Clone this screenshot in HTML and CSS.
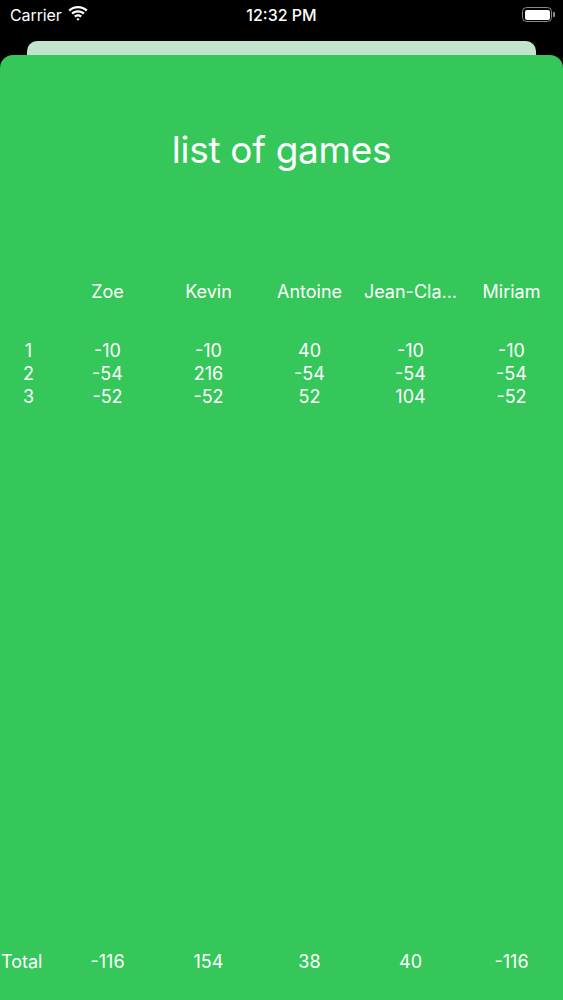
FILE: index.html
```html
<!DOCTYPE html>
<html>
<head>
<meta charset="utf-8">
<link rel="stylesheet" href="styles.css">
</head>
<body>
<div class="screen">
  <div class="status">
    <div class="status-left">
      <span class="carrier">Carrier</span>
      <svg class="wifi" width="20" height="15" viewBox="0 0 20 15">
        <path d="M10 2.2c3.1 0 5.9 1.2 8 3.2l1.6-1.6C17.1 1.4 13.7 0 10 0S2.9 1.4.4 3.8L2 5.4c2.1-2 4.9-3.2 8-3.2z" fill="#fff"/>
        <path d="M10 6.4c2 0 3.8.8 5.1 2l1.6-1.6C15 5.1 12.6 4.2 10 4.2S5 5.1 3.3 6.8l1.6 1.6c1.3-1.2 3.1-2 5.1-2z" fill="#fff"/>
        <path d="M10 10.5c.9 0 1.7.3 2.3.9l1.6-1.6C12.9 8.8 11.5 8.3 10 8.3s-2.9.5-3.9 1.5l1.6 1.6c.6-.6 1.4-.9 2.3-.9z" fill="#fff"/>
        <path d="M10 14.8l1.6-1.9c-.4-.4-1-.6-1.6-.6s-1.2.2-1.6.6z" fill="#fff"/>
      </svg>
    </div>
    <span class="time">12:32 PM</span>
    <div class="battery">
      <div class="battery-body"><div class="battery-fill"></div></div>
      <div class="battery-cap"></div>
    </div>
  </div>
  <div class="back-card"></div>
  <div class="sheet">
    <h1 class="title">list of games</h1>
    <div class="grid header-row">
      <span></span><span>Zoe</span><span>Kevin</span><span>Antoine</span><span>Jean-Cla...</span><span>Miriam</span>
    </div>
    <div class="rows">
      <div class="grid row"><span>1</span><span>-10</span><span>-10</span><span>40</span><span>-10</span><span>-10</span></div>
      <div class="grid row"><span>2</span><span>-54</span><span>216</span><span>-54</span><span>-54</span><span>-54</span></div>
      <div class="grid row"><span>3</span><span>-52</span><span>-52</span><span>52</span><span>104</span><span>-52</span></div>
    </div>
    <div class="spacer"></div>
    <div class="grid total-row"><span class="total-label">Total</span><span>-116</span><span>154</span><span>38</span><span>40</span><span>-116</span></div>
  </div>
</div>
</body>
</html>
```

FILE: styles.css
```css
* { box-sizing: border-box; margin: 0; padding: 0; }
html, body { width: 563px; height: 1000px; background: #000; overflow: hidden; }
body { font-family: Inter, Roboto, "Liberation Sans", sans-serif; color: #fff; }
.screen { position: relative; width: 563px; height: 1000px; display: flex; flex-direction: column; }
.status { height: 29px; display: flex; align-items: center; justify-content: space-between; padding: 0 8px 0 10px; position: relative; }
.status-left { display: flex; align-items: center; gap: 6px; }
.carrier { font-size: 16px; letter-spacing: -0.1px; }
.wifi { margin-top: -2px; }
.time { position: absolute; left: 0; right: 0; text-align: center; font-size: 16px; font-weight: 500; pointer-events: none; }
.battery { display: flex; align-items: center; gap: 1px; }
.battery-body { width: 30px; height: 15px; border: 1.5px solid #8a8a8a; border-radius: 4.5px; padding: 1.5px; }
.battery-fill { width: 100%; height: 100%; background: #fff; border-radius: 2px; }
.battery-cap { width: 2px; height: 5px; background: #8a8a8a; border-radius: 0 1px 1px 0; }
.back-card { margin: 12px 27px 0 27px; height: 30px; background: #c3e4cc; border-radius: 10px 10px 0 0; }
.sheet { position: absolute; top: 55px; left: 0; right: 0; bottom: 0; background: #35c75a; border-radius: 13px 13px 0 0; display: flex; flex-direction: column; }
.title { font-weight: 400; font-size: 37px; text-align: center; margin-top: 73px; line-height: 44px; letter-spacing: -0.3px; }
.grid { display: grid; grid-template-columns: 57px repeat(5, 101px); text-align: center; font-size: 18px; }
.header-row { margin-top: 108px; line-height: 24px; }
.rows { margin-top: 35px; }
.row { line-height: 23px; }
.spacer { flex: 1; }
.total-row { line-height: 24px; margin-bottom: 26px; }
.total-label { text-align: left; padding-left: 1px; }
```
